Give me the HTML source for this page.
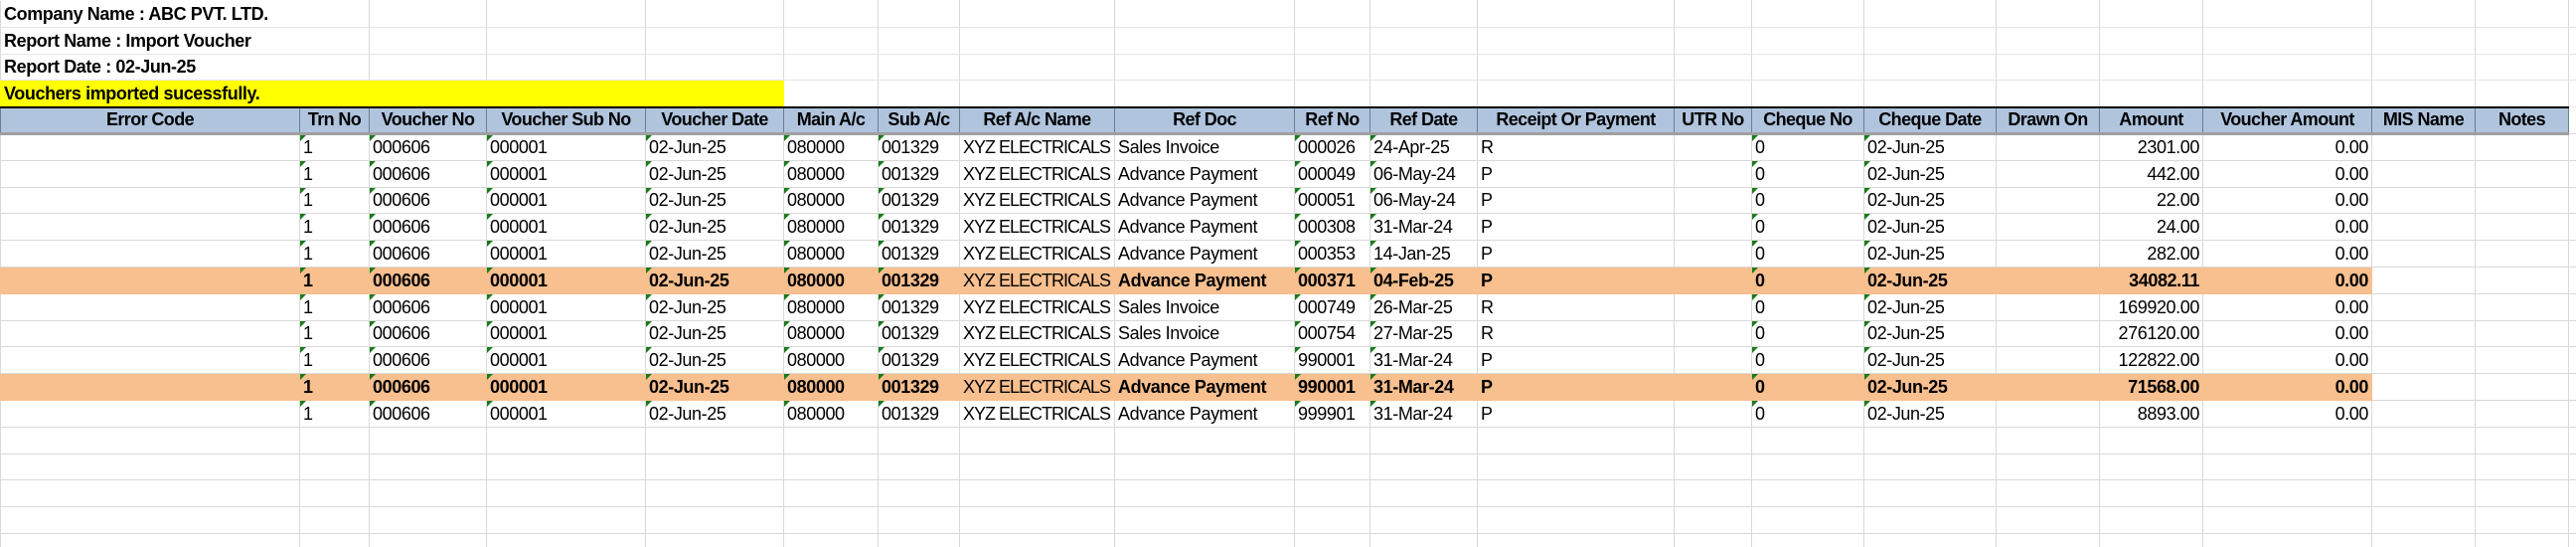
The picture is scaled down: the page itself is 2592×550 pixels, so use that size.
<!DOCTYPE html>
<html><head><meta charset="utf-8"><style>
html,body{margin:0;padding:0;background:#fff;width:2592px;height:550px;overflow:hidden}
table{border-collapse:collapse;table-layout:fixed;width:2592px;font-family:"Liberation Sans",sans-serif;font-size:18px;letter-spacing:-0.4px;color:#000}
td{height:26.8px;padding:0 3px 2px 3px;border:1px solid #d9d9d9;white-space:nowrap;overflow:hidden;vertical-align:bottom;line-height:21px;box-sizing:border-box;position:relative}
tr.t td{border-top-color:#fff;border-bottom-color:#e4e4e4}
tr.t td.lbl{font-weight:bold;border-right-color:transparent}
td.y{background:#ffff00;font-weight:bold;border-color:#ffff00}
tr.h td{background:#b0c4de;font-weight:bold;text-align:center;border:1px solid #6f7f8f;border-top:2px solid #000;border-bottom:3px solid #a0a0a0;letter-spacing:-0.6px}
tr.h td:last-child{background:#fff;border:1px solid #d9d9d9;border-bottom:1px solid #d9d9d9}
td.r{text-align:right}
td.g::before{content:"";position:absolute;left:0;top:0;border-top:6px solid #1a7a1a;border-right:6px solid transparent}
tr.o td{background:#f8bf8f;font-weight:bold;border-color:#f8bf8f}
tr.o td.n{font-weight:normal}
tr.o td.w{background:#fff;border-color:#d9d9d9}
td.x{letter-spacing:-1px}
</style></head><body>
<table>
<colgroup>
<col style="width:301px"><col style="width:70px"><col style="width:118px"><col style="width:160px"><col style="width:139px"><col style="width:95px"><col style="width:82px"><col style="width:156px"><col style="width:181px"><col style="width:76px"><col style="width:108px"><col style="width:198px"><col style="width:78px"><col style="width:113px"><col style="width:133px"><col style="width:104px"><col style="width:104px"><col style="width:170px"><col style="width:104px"><col style="width:94px"><col style="width:8px">
</colgroup>
<tr class="t"><td class="lbl" style="overflow:visible">Company Name : ABC PVT. LTD.</td><td></td><td></td><td></td><td></td><td></td><td></td><td></td><td></td><td></td><td></td><td></td><td></td><td></td><td></td><td></td><td></td><td></td><td></td><td></td><td></td></tr>
<tr class="t"><td class="lbl" style="overflow:visible">Report Name : Import Voucher</td><td></td><td></td><td></td><td></td><td></td><td></td><td></td><td></td><td></td><td></td><td></td><td></td><td></td><td></td><td></td><td></td><td></td><td></td><td></td><td></td></tr>
<tr class="t"><td class="lbl">Report Date : 02-Jun-25</td><td></td><td></td><td></td><td></td><td></td><td></td><td></td><td></td><td></td><td></td><td></td><td></td><td></td><td></td><td></td><td></td><td></td><td></td><td></td><td></td></tr>
<tr class="t"><td class="y" colspan="5">Vouchers imported sucessfully.</td><td></td><td></td><td></td><td></td><td></td><td></td><td></td><td></td><td></td><td></td><td></td><td></td><td></td><td></td><td></td><td></td></tr>
<tr class="h"><td>Error Code</td><td>Trn No</td><td>Voucher No</td><td>Voucher Sub No</td><td>Voucher Date</td><td>Main A/c</td><td>Sub A/c</td><td>Ref A/c Name</td><td>Ref Doc</td><td>Ref No</td><td>Ref Date</td><td>Receipt Or Payment</td><td>UTR No</td><td>Cheque No</td><td>Cheque Date</td><td>Drawn On</td><td>Amount</td><td>Voucher Amount</td><td>MIS Name</td><td>Notes</td><td></td></tr>
<tr><td></td><td class="g">1</td><td class="g">000606</td><td class="g">000001</td><td class="g">02-Jun-25</td><td class="g">080000</td><td class="g">001329</td><td class="x">XYZ ELECTRICALS</td><td>Sales Invoice</td><td class="g">000026</td><td class="g">24-Apr-25</td><td>R</td><td></td><td class="g">0</td><td class="g">02-Jun-25</td><td></td><td class="r">2301.00</td><td class="r">0.00</td><td></td><td></td><td></td></tr>
<tr><td></td><td class="g">1</td><td class="g">000606</td><td class="g">000001</td><td class="g">02-Jun-25</td><td class="g">080000</td><td class="g">001329</td><td class="x">XYZ ELECTRICALS</td><td>Advance Payment</td><td class="g">000049</td><td class="g">06-May-24</td><td>P</td><td></td><td class="g">0</td><td class="g">02-Jun-25</td><td></td><td class="r">442.00</td><td class="r">0.00</td><td></td><td></td><td></td></tr>
<tr><td></td><td class="g">1</td><td class="g">000606</td><td class="g">000001</td><td class="g">02-Jun-25</td><td class="g">080000</td><td class="g">001329</td><td class="x">XYZ ELECTRICALS</td><td>Advance Payment</td><td class="g">000051</td><td class="g">06-May-24</td><td>P</td><td></td><td class="g">0</td><td class="g">02-Jun-25</td><td></td><td class="r">22.00</td><td class="r">0.00</td><td></td><td></td><td></td></tr>
<tr><td></td><td class="g">1</td><td class="g">000606</td><td class="g">000001</td><td class="g">02-Jun-25</td><td class="g">080000</td><td class="g">001329</td><td class="x">XYZ ELECTRICALS</td><td>Advance Payment</td><td class="g">000308</td><td class="g">31-Mar-24</td><td>P</td><td></td><td class="g">0</td><td class="g">02-Jun-25</td><td></td><td class="r">24.00</td><td class="r">0.00</td><td></td><td></td><td></td></tr>
<tr><td></td><td class="g">1</td><td class="g">000606</td><td class="g">000001</td><td class="g">02-Jun-25</td><td class="g">080000</td><td class="g">001329</td><td class="x">XYZ ELECTRICALS</td><td>Advance Payment</td><td class="g">000353</td><td class="g">14-Jan-25</td><td>P</td><td></td><td class="g">0</td><td class="g">02-Jun-25</td><td></td><td class="r">282.00</td><td class="r">0.00</td><td></td><td></td><td></td></tr>
<tr class="o"><td></td><td class="g">1</td><td class="g">000606</td><td class="g">000001</td><td class="g">02-Jun-25</td><td class="g">080000</td><td class="g">001329</td><td class="x n">XYZ ELECTRICALS</td><td>Advance Payment</td><td class="g">000371</td><td class="g">04-Feb-25</td><td>P</td><td></td><td class="g">0</td><td class="g">02-Jun-25</td><td></td><td class="r">34082.11</td><td class="r">0.00</td><td class="w"></td><td class="w"></td><td class="w"></td></tr>
<tr><td></td><td class="g">1</td><td class="g">000606</td><td class="g">000001</td><td class="g">02-Jun-25</td><td class="g">080000</td><td class="g">001329</td><td class="x">XYZ ELECTRICALS</td><td>Sales Invoice</td><td class="g">000749</td><td class="g">26-Mar-25</td><td>R</td><td></td><td class="g">0</td><td class="g">02-Jun-25</td><td></td><td class="r">169920.00</td><td class="r">0.00</td><td></td><td></td><td></td></tr>
<tr><td></td><td class="g">1</td><td class="g">000606</td><td class="g">000001</td><td class="g">02-Jun-25</td><td class="g">080000</td><td class="g">001329</td><td class="x">XYZ ELECTRICALS</td><td>Sales Invoice</td><td class="g">000754</td><td class="g">27-Mar-25</td><td>R</td><td></td><td class="g">0</td><td class="g">02-Jun-25</td><td></td><td class="r">276120.00</td><td class="r">0.00</td><td></td><td></td><td></td></tr>
<tr><td></td><td class="g">1</td><td class="g">000606</td><td class="g">000001</td><td class="g">02-Jun-25</td><td class="g">080000</td><td class="g">001329</td><td class="x">XYZ ELECTRICALS</td><td>Advance Payment</td><td class="g">990001</td><td class="g">31-Mar-24</td><td>P</td><td></td><td class="g">0</td><td class="g">02-Jun-25</td><td></td><td class="r">122822.00</td><td class="r">0.00</td><td></td><td></td><td></td></tr>
<tr class="o"><td></td><td class="g">1</td><td class="g">000606</td><td class="g">000001</td><td class="g">02-Jun-25</td><td class="g">080000</td><td class="g">001329</td><td class="x n">XYZ ELECTRICALS</td><td>Advance Payment</td><td class="g">990001</td><td class="g">31-Mar-24</td><td>P</td><td></td><td class="g">0</td><td class="g">02-Jun-25</td><td></td><td class="r">71568.00</td><td class="r">0.00</td><td class="w"></td><td class="w"></td><td class="w"></td></tr>
<tr><td></td><td class="g">1</td><td class="g">000606</td><td class="g">000001</td><td class="g">02-Jun-25</td><td class="g">080000</td><td class="g">001329</td><td class="x">XYZ ELECTRICALS</td><td>Advance Payment</td><td class="g">999901</td><td class="g">31-Mar-24</td><td>P</td><td></td><td class="g">0</td><td class="g">02-Jun-25</td><td></td><td class="r">8893.00</td><td class="r">0.00</td><td></td><td></td><td></td></tr>
<tr><td></td><td></td><td></td><td></td><td></td><td></td><td></td><td></td><td></td><td></td><td></td><td></td><td></td><td></td><td></td><td></td><td></td><td></td><td></td><td></td><td></td></tr>
<tr><td></td><td></td><td></td><td></td><td></td><td></td><td></td><td></td><td></td><td></td><td></td><td></td><td></td><td></td><td></td><td></td><td></td><td></td><td></td><td></td><td></td></tr>
<tr><td></td><td></td><td></td><td></td><td></td><td></td><td></td><td></td><td></td><td></td><td></td><td></td><td></td><td></td><td></td><td></td><td></td><td></td><td></td><td></td><td></td></tr>
<tr><td></td><td></td><td></td><td></td><td></td><td></td><td></td><td></td><td></td><td></td><td></td><td></td><td></td><td></td><td></td><td></td><td></td><td></td><td></td><td></td><td></td></tr>
<tr><td></td><td></td><td></td><td></td><td></td><td></td><td></td><td></td><td></td><td></td><td></td><td></td><td></td><td></td><td></td><td></td><td></td><td></td><td></td><td></td><td></td></tr>
</table>
</body></html>
